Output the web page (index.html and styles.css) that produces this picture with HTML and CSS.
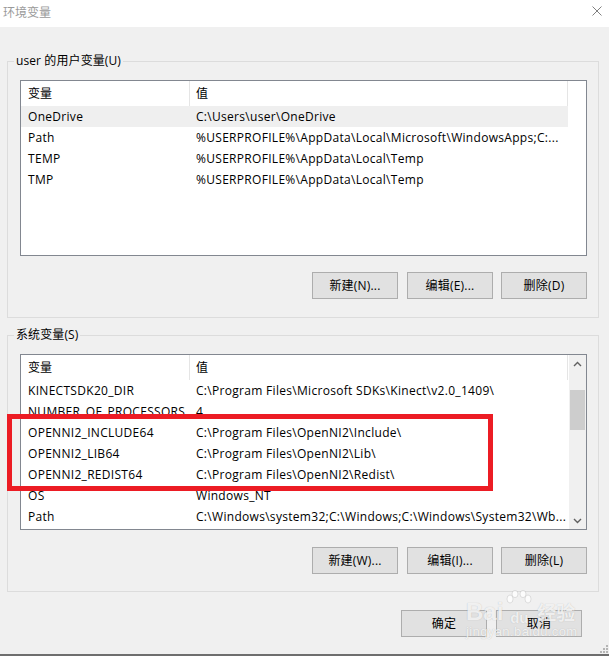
FILE: index.html
```html
<!DOCTYPE html>
<html lang="zh-CN">
<head>
<meta charset="utf-8">
<title>环境变量</title>
<link rel="stylesheet" href="styles.css">
</head>
<body>
<div class="window">
  <div class="titlebar">
    <span class="title">环境变量</span>
    <svg class="close" width="10" height="10" viewBox="0 0 10 10"><path d="M0.5 0.5 L9.5 9.5 M9.5 0.5 L0.5 9.5" stroke="#808080" stroke-width="1" fill="none"/></svg>
  </div>
  <div class="content">
    <fieldset class="group">
      <legend>user 的用户变量(U)</legend>
      <div class="list">
        <div class="table fixed">
          <div class="row head"><div class="c1">变量</div><div class="c2">值</div></div>
          <div class="row sel"><div class="c1">OneDrive</div><div class="c2">C:\Users\user\OneDrive</div></div>
          <div class="row"><div class="c1">Path</div><div class="c2">%USERPROFILE%\AppData\Local\Microsoft\WindowsApps;C:...</div></div>
          <div class="row"><div class="c1">TEMP</div><div class="c2">%USERPROFILE%\AppData\Local\Temp</div></div>
          <div class="row"><div class="c1">TMP</div><div class="c2">%USERPROFILE%\AppData\Local\Temp</div></div>
        </div>
        <div class="filler"></div>
      </div>
      <div class="buttons">
        <div class="btn">新建(N)...</div>
        <div class="btn">编辑(E)...</div>
        <div class="btn">删除(D)</div>
      </div>
    </fieldset>
    <fieldset class="group">
      <legend>系统变量(S)</legend>
      <div class="list">
        <div class="table">
          <div class="row head"><div class="c1">变量</div><div class="c2">值</div></div>
          <div class="row"><div class="c1">KINECTSDK20_DIR</div><div class="c2">C:\Program Files\Microsoft SDKs\Kinect\v2.0_1409\</div></div>
          <div class="row"><div class="c1">NUMBER_OF_PROCESSORS</div><div class="c2">4</div></div>
          <div class="row"><div class="c1">OPENNI2_INCLUDE64</div><div class="c2">C:\Program Files\OpenNI2\Include\</div></div>
          <div class="row"><div class="c1">OPENNI2_LIB64</div><div class="c2">C:\Program Files\OpenNI2\Lib\</div></div>
          <div class="row"><div class="c1">OPENNI2_REDIST64</div><div class="c2">C:\Program Files\OpenNI2\Redist\</div></div>
          <div class="row"><div class="c1">OS</div><div class="c2">Windows_NT</div></div>
          <div class="row"><div class="c1">Path</div><div class="c2">C:\Windows\system32;C:\Windows;C:\Windows\System32\Wb...</div></div>
        </div>
        <div class="vscroll">
          <div class="arrow"><svg width="9" height="6" viewBox="0 0 9 6"><path d="M1 5 L4.5 1.5 L8 5" stroke="#606060" stroke-width="1.4" fill="none"/></svg></div>
          <div class="track"><div class="thumb"></div></div>
          <div class="arrow"><svg width="9" height="6" viewBox="0 0 9 6"><path d="M1 1 L4.5 4.5 L8 1" stroke="#606060" stroke-width="1.4" fill="none"/></svg></div>
        </div>
      </div>
      <div class="buttons">
        <div class="btn">新建(W)...</div>
        <div class="btn">编辑(I)...</div>
        <div class="btn">删除(L)</div>
      </div>
    </fieldset>
    <div class="footer">
      <div class="btn">确定</div>
      <div class="btn">取消</div>
    </div>
  </div>
  <div class="redbox"></div>
  <div class="watermark">
    <div class="wm-top">
      <span class="wm-bai">Bai</span>
      <span class="wm-paw">
        <svg width="30" height="22" viewBox="0 0 30 22"><g fill="rgba(255,255,255,0.8)" stroke="rgba(150,150,150,0.35)" stroke-width="0.8"><ellipse cx="6" cy="9" rx="3" ry="4"/><ellipse cx="11" cy="4" rx="3" ry="3.6"/><ellipse cx="19" cy="4" rx="3" ry="3.6"/><ellipse cx="24" cy="9" rx="3" ry="4"/></g></svg>
        <span class="wm-du">du</span>
      </span>
      <span class="wm-jy">经验</span>
    </div>
    <div class="wm-url">jingyan.baidu.com</div>
  </div>
  <svg class="grip" width="9" height="9" viewBox="0 0 9 9"><g fill="#b5b5b5"><rect x="7" y="1" width="2" height="2"/><rect x="4" y="4" width="2" height="2"/><rect x="7" y="4" width="2" height="2"/><rect x="1" y="7" width="2" height="2"/><rect x="4" y="7" width="2" height="2"/><rect x="7" y="7" width="2" height="2"/></g></svg>
</div>
<div class="taskbar"></div>
</body>
</html>
```
FILE: styles.css
```css
* { box-sizing: border-box; }
html, body { margin: 0; }
body {
  width: 609px;
  height: 656px;
  overflow: hidden;
  font-family: "Open Sans", "Noto Sans CJK SC", sans-serif;
  font-size: 12px;
  color: #000;
  background: #f0f0f0;
}
.window {
  position: relative;
  height: 654px;
  display: flex;
  flex-direction: column;
  background: #f0f0f0;
}
.titlebar {
  height: 27px;
  flex: none;
  background: #fff;
  display: flex;
  justify-content: space-between;
  align-items: flex-start;
  padding: 4px 7px 0 3px;
}
.title {
  color: #9a9a9a;
  line-height: 16px;
  font-family: "Noto Sans CJK SC", sans-serif;
}
.close { margin-top: 2px; }
.content {
  flex: 1;
  padding: 26px 10px 0 7px;
  display: flex;
  flex-direction: column;
}
.group {
  margin: 0;
  min-width: 0;
  border: 1px solid #dcdcdc;
  padding: 11px 11px 17px 12px;
}
.group + .group { margin-top: 9px; }
.group legend {
  padding: 0 2px;
  margin-left: -6px;
  line-height: 16px;
  letter-spacing: 0.1px;
}
.list {
  height: 176px;
  border: 1px solid #828790;
  background: #fff;
  display: flex;
}
.table {
  flex: 1;
  min-width: 0;
  display: flex;
  flex-direction: column;
  overflow: hidden;
}
.table.fixed { flex: 0 0 547px; }
.filler { flex: 1; }
.row {
  display: flex;
  height: 21px;
  line-height: 21px;
  white-space: nowrap;
  flex: none;
  letter-spacing: 0.3px;
}
.row.head { height: 25px; line-height: 25px; letter-spacing: 0; }
.c1 { width: 169px; flex: none; padding-left: 7px; overflow: hidden; }
.c2 { width: 378px; flex: none; padding-left: 6px; overflow: hidden; }
.head .c1, .head .c2 { border-right: 1px solid #e5e5e5; }
.sel { background: #efefef; }
.vscroll {
  width: 17px;
  flex: none;
  background: #f0f0f0;
  display: flex;
  flex-direction: column;
}
.arrow {
  height: 17px;
  flex: none;
  display: flex;
  align-items: center;
  justify-content: center;
}
.arrow svg { display: block; }
.track { flex: 1; padding: 18px 1px 0; }
.thumb { height: 40px; background: #cdcdcd; }
.buttons {
  display: flex;
  justify-content: flex-end;
  gap: 8px;
  margin-top: 16px;
}
.group .buttons .btn:first-child { margin-right: 1px; }
.btn {
  width: 86px;
  height: 27px;
  border: 1px solid #adadad;
  background: #e1e1e1;
  display: flex;
  align-items: center;
  justify-content: center;
  line-height: 1;
  letter-spacing: 0.2px;
}
.group + .group .buttons { margin-top: 17px; }
.group:first-of-type { padding-bottom: 18px; }
.footer {
  display: flex;
  justify-content: flex-end;
  gap: 9px;
  margin-top: 18px;
  padding-right: 17px;
}
.redbox {
  position: absolute;
  left: 7px;
  top: 414px;
  width: 486px;
  height: 77px;
  border: 5px solid #ec1c24;
}
.watermark {
  position: absolute;
  left: 466px;
  top: 590px;
  color: rgba(255, 255, 255, 0.8);
  text-shadow: 0 0 1px rgba(120, 120, 120, 0.45);
  pointer-events: none;
}
.wm-top { display: flex; align-items: flex-end; height: 34px; }
.wm-bai { font-family: "Liberation Sans", sans-serif; font-weight: bold; font-size: 24px; line-height: 24px; }
.wm-paw { position: relative; width: 32px; height: 34px; display: flex; flex-direction: column; align-items: center; }
.wm-paw svg { display: block; }
.wm-du { font-family: "Liberation Sans", sans-serif; font-weight: bold; font-size: 15px; line-height: 12px; }
.wm-jy { font-family: "Noto Sans CJK SC", sans-serif; font-weight: bold; font-size: 19px; line-height: 24px; margin-left: 2px; }
.wm-url { font-family: "Liberation Sans", sans-serif; font-size: 13px; line-height: 16px; letter-spacing: 0.4px; }
.grip { position: absolute; right: 1px; bottom: 1px; }
.taskbar { height: 2px; background: #6e6e6e; }
```
